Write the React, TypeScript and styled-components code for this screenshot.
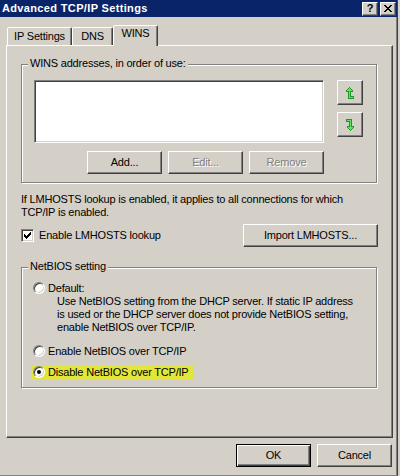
import React from 'react';
import styled, { createGlobalStyle, css } from 'styled-components';

const GlobalStyle = createGlobalStyle`
	html,
	body {
		margin: 0;
		padding: 0;
		background: #d4d0c8;
		overflow: hidden;
	}
	body {
		font-family: 'Liberation Sans', Arial, sans-serif;
		font-size: 11px;
		letter-spacing: -0.2px;
		color: #000;
	}
`;

const Window = styled.div`
	box-sizing: border-box;
	width: 398px;
	height: 476px;
	background: #d4d0c8;
	border-right: 1px solid #404040;
	border-bottom: 1px solid #808080;
	box-shadow: inset -1px 0 0 #808080;
	display: flex;
	flex-direction: column;
`;

const TitleBar = styled.div`
	height: 17px;
	background: #0a246a;
	display: flex;
	align-items: center;
	justify-content: space-between;
	padding: 0 1px 0 2px;
`;

const Title = styled.span`
	color: #fff;
	font-weight: bold;
	font-size: 11px;
	letter-spacing: 0.35px;
	line-height: 13px;
`;

const CaptionButtons = styled.div`
	display: flex;
	gap: 2px;
`;

const bevel = css`
	box-sizing: border-box;
	background: #d4d0c8;
	border: 1px solid;
	border-color: #fff #404040 #404040 #fff;
	box-shadow: inset -1px -1px 0 #808080;
`;

const CaptionButton = styled.div`
	${bevel};
	width: 16px;
	height: 14px;
	display: flex;
	align-items: center;
	justify-content: center;
	font-weight: bold;
	font-size: 11px;
	line-height: 12px;
	padding-bottom: 1px;
`;

const TabStrip = styled.div`
	display: flex;
	align-items: flex-end;
	height: 20px;
	margin: 8px 0 0 7px;
`;

const Tab = styled.div<{ $active?: boolean; $w: number }>`
	box-sizing: border-box;
	width: ${(p) => p.$w}px;
	height: 18px;
	border: 1px solid;
	border-bottom: none;
	border-color: #fff #404040 transparent #fff;
	border-radius: 2px 2px 0 0;
	box-shadow: inset -1px 0 0 #808080;
	background: #d4d0c8;
	text-align: center;
	line-height: 13px;
	padding-top: 2px;
	${(p) =>
		p.$active &&
		css`
			height: 21px;
			margin-bottom: -1px;
			padding-top: 1px;
			position: relative;
			z-index: 1;
		`}
`;

const Panel = styled.div`
	box-sizing: border-box;
	width: 387px;
	height: 393px;
	margin-left: 6px;
	border: 1px solid;
	border-color: #fff #404040 #404040 #fff;
	box-shadow: inset -1px -1px 0 #808080;
	padding: 18px 14px 0 14px;
	display: flex;
	flex-direction: column;
`;

const GroupBox = styled.div<{ $pad: string }>`
	position: relative;
	box-sizing: border-box;
	margin-right: 1px;
	border: 1px solid #808080;
	box-shadow: inset 1px 1px 0 #fff, 1px 1px 0 #fff;
	padding: ${(p) => p.$pad};
	display: flex;
	flex-direction: column;
`;

const Legend = styled.span`
	position: absolute;
	top: -8px;
	left: 6px;
	padding: 0 2px;
	background: #d4d0c8;
	line-height: 13px;
`;

const ListRow = styled.div`
	display: flex;
	gap: 13px;
`;

const ListBox = styled.div`
	box-sizing: border-box;
	width: 290px;
	height: 63px;
	background: #fff;
	border: 1px solid;
	border-color: #808080 #fff #fff #808080;
	box-shadow: inset 1px 1px 0 #404040, inset -1px -1px 0 #d4d0c8;
`;

const ArrowColumn = styled.div`
	display: flex;
	flex-direction: column;
	gap: 7px;
`;

const ArrowButton = styled.div`
	${bevel};
	width: 26px;
	height: 25px;
	display: flex;
	align-items: center;
	justify-content: center;
`;

const ButtonRow = styled.div<{ $gap?: number }>`
	display: flex;
	justify-content: flex-end;
	gap: ${(p) => p.$gap ?? 6}px;
`;

const ListButtons = styled(ButtonRow)`
	width: 290px;
	margin-top: 8px;
`;

const Button = styled.div<{ $w?: number; $disabled?: boolean; $default?: boolean }>`
	${bevel};
	width: ${(p) => p.$w ?? 75}px;
	height: 23px;
	display: flex;
	align-items: center;
	justify-content: center;
	line-height: 13px;
	${(p) =>
		p.$disabled &&
		css`
			color: #808080;
			text-shadow: 1px 1px 0 #fff;
		`}
	${(p) =>
		p.$default &&
		css`
			border-color: #000;
			box-shadow: inset 1px 1px 0 #fff, inset -1px -1px 0 #404040, inset -2px -2px 0 #808080;
		`}
`;

const Note = styled.p`
	margin: 10px 0 0;
	line-height: 13px;
`;

const CheckRow = styled.div`
	display: flex;
	align-items: center;
	justify-content: space-between;
	margin-top: 5px;
	height: 23px;
`;

const CheckLabel = styled.label`
	display: flex;
	align-items: center;
	gap: 5px;
	line-height: 13px;
`;

const CheckBox = styled.span`
	box-sizing: border-box;
	width: 13px;
	height: 13px;
	background: #fff;
	border: 1px solid;
	border-color: #808080 #fff #fff #808080;
	box-shadow: inset 1px 1px 0 #404040, inset -1px -1px 0 #d4d0c8;
	display: flex;
	align-items: center;
	justify-content: center;
`;

const NetBiosGroup = styled(GroupBox)`
	margin-top: 20px;
`;

const RadioRow = styled.div<{ $top?: number; $marked?: boolean }>`
	display: flex;
	align-items: center;
	gap: 3px;
	height: 14px;
	line-height: 14px;
	margin-top: ${(p) => p.$top ?? 0}px;
	${(p) =>
		p.$marked &&
		css`
			align-self: flex-start;
			background: #e3e63a;
			margin-left: -2px;
			padding: 0 4px 0 2px;
		`}
`;

const Radio = styled.span`
	box-sizing: border-box;
	width: 12px;
	height: 12px;
	border-radius: 50%;
	background: #fff;
	border: 1px solid;
	border-color: #808080 #fff #fff #808080;
	box-shadow: inset 1px 1px 0 #404040, inset -1px -1px 0 #d4d0c8;
	display: flex;
	align-items: center;
	justify-content: center;
`;

const RadioDot = styled.span`
	width: 4px;
	height: 4px;
	border-radius: 50%;
	background: #000;
`;

const Description = styled.div`
	margin-left: 24px;
	line-height: 13px;
`;

const Footer = styled(ButtonRow)`
	margin-top: 6px;
	padding-right: 5px;
`;

type PixelProps = { rows: string[]; palette: Record<string, string> };

const Pixels = ({ rows, palette }: PixelProps) => (
	<svg width={rows[0].length} height={rows.length} shapeRendering='crispEdges'>
		{rows.flatMap((row, y) =>
			[...row].map((c, x) =>
				palette[c] ? <rect key={`${x}-${y}`} x={x} y={y} width={1} height={1} fill={palette[c]} /> : null
			)
		)}
	</svg>
);

const arrowUp = [
	'...o....',
	'..ogo...',
	'.ogggo..',
	'ogggggo.',
	'ooogooo.',
	'..ogo...',
	'..ogo...',
	'..ogo...',
	'..ogo...',
	'..ogoooo',
	'..oggggo',
	'..oooooo'
];
const arrowDown = [...arrowUp].reverse().map((r) => [...r].reverse().join(''));
const arrowPalette = { o: '#22962a', g: '#62e062' };

const closeX = ['##....##', '.##..##.', '..####..', '...##...', '..####..', '.##..##.', '##....##'];

const checkMark = ['......#', '.....##', '#...###', '##.###.', '#####..', '.###...', '..#....'];

const App = () => (
	<>
		<GlobalStyle />
		<Window>
			<TitleBar>
				<Title>Advanced TCP/IP Settings</Title>
				<CaptionButtons>
					<CaptionButton>?</CaptionButton>
					<CaptionButton>
						<Pixels rows={closeX} palette={{ '#': '#000' }} />
					</CaptionButton>
				</CaptionButtons>
			</TitleBar>
			<TabStrip>
				<Tab $w={65}>IP Settings</Tab>
				<Tab $w={41}>DNS</Tab>
				<Tab $w={45} $active>
					WINS
				</Tab>
			</TabStrip>
			<Panel>
				<GroupBox $pad='15px 0 8px 12px'>
					<Legend>WINS addresses, in order of use:</Legend>
					<ListRow>
						<ListBox />
						<ArrowColumn>
							<ArrowButton>
								<Pixels rows={arrowUp} palette={arrowPalette} />
							</ArrowButton>
							<ArrowButton>
								<Pixels rows={arrowDown} palette={arrowPalette} />
							</ArrowButton>
						</ArrowColumn>
					</ListRow>
					<ListButtons>
						<Button>Add...</Button>
						<Button $disabled>Edit...</Button>
						<Button $disabled>Remove</Button>
					</ListButtons>
				</GroupBox>
				<Note>
					If LMHOSTS lookup is enabled, it applies to all connections for which
					<br />
					TCP/IP is enabled.
				</Note>
				<CheckRow>
					<CheckLabel>
						<CheckBox>
							<Pixels rows={checkMark} palette={{ '#': '#000' }} />
						</CheckBox>
						Enable LMHOSTS lookup
					</CheckLabel>
					<Button $w={135}>Import LMHOSTS...</Button>
				</CheckRow>
				<NetBiosGroup $pad='13px 0 8px 11px'>
					<Legend>NetBIOS setting</Legend>
					<RadioRow>
						<Radio />
						Default:
					</RadioRow>
					<Description>
						Use NetBIOS setting from the DHCP server. If static IP address
						<br />
						is used or the DHCP server does not provide NetBIOS setting,
						<br />
						enable NetBIOS over TCP/IP.
					</Description>
					<RadioRow $top={10}>
						<Radio />
						Enable NetBIOS over TCP/IP
					</RadioRow>
					<RadioRow $top={7} $marked>
						<Radio>
							<RadioDot />
						</Radio>
						Disable NetBIOS over TCP/IP
					</RadioRow>
				</NetBiosGroup>
			</Panel>
			<Footer>
				<Button $default>OK</Button>
				<Button>Cancel</Button>
			</Footer>
		</Window>
	</>
);

export default App;
